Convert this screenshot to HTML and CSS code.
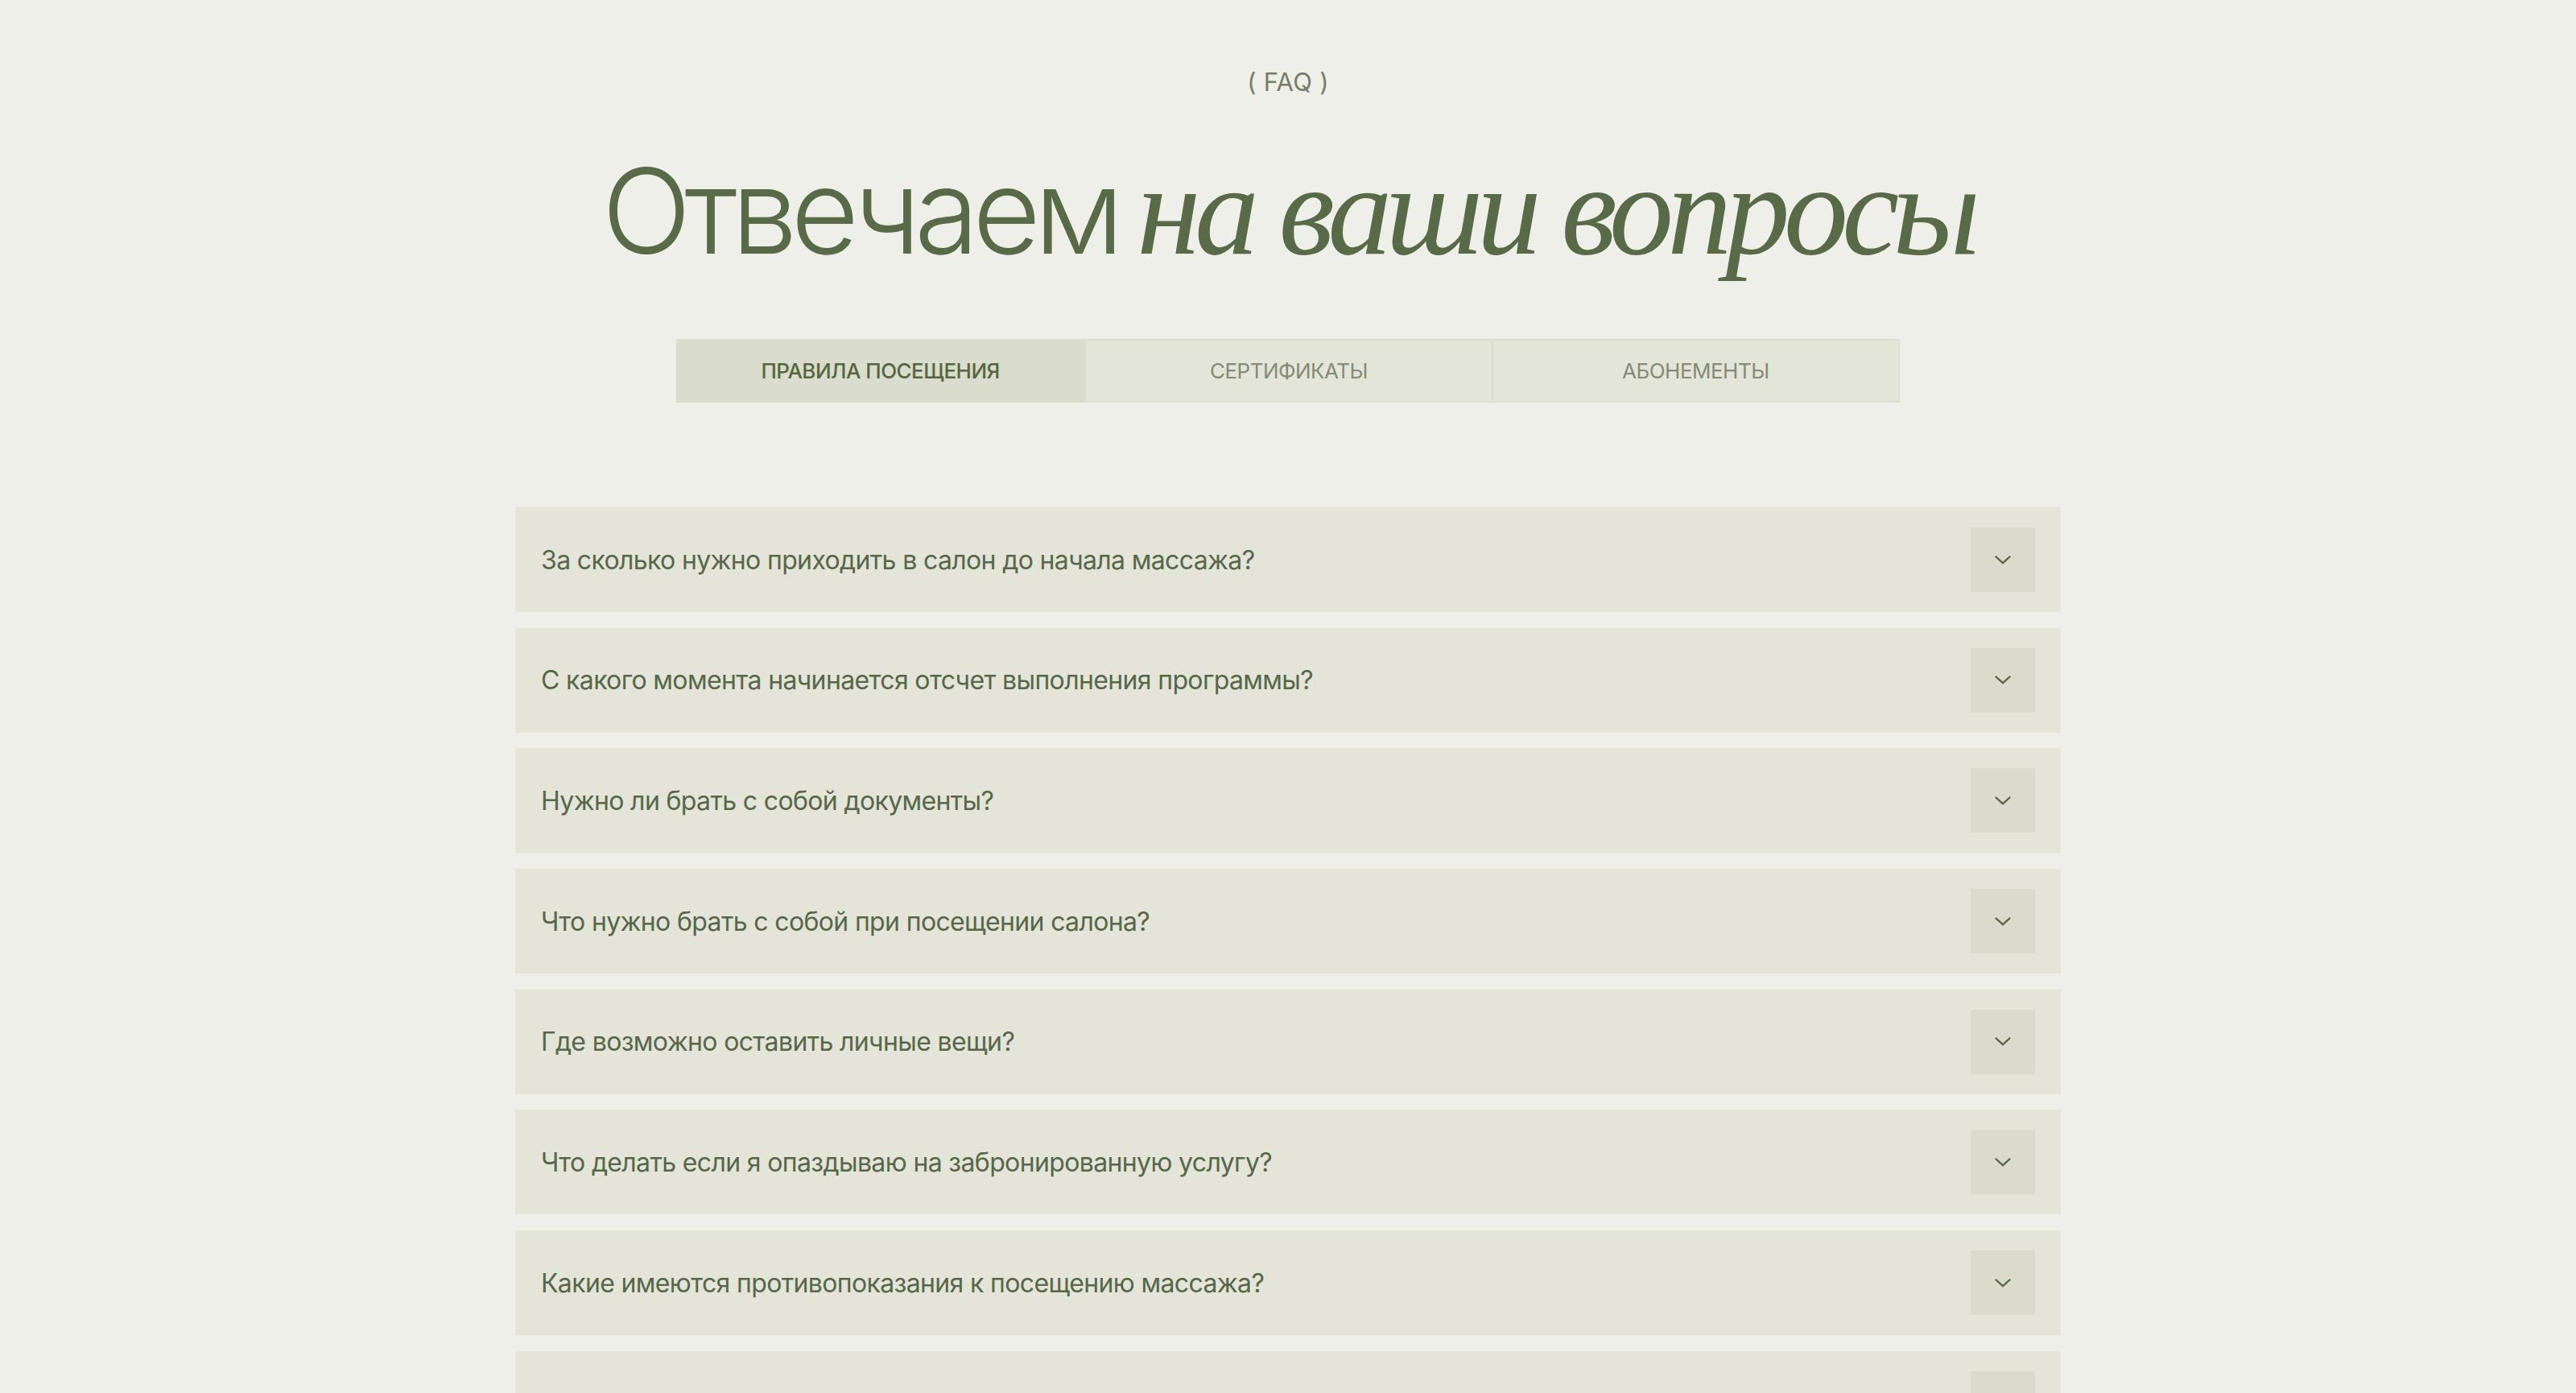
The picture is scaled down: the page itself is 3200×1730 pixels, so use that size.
FILE: index.html
```html
<!DOCTYPE html>
<html lang="ru">
<head>
<meta charset="utf-8">
<title>FAQ</title>
<link rel="stylesheet" href="styles.css">
</head>
<body>
<section class="faq">
  <div class="eyebrow">( FAQ )</div>
  <h1 class="title"><span class="title-sans">Отвечаем</span> <span class="title-serif">на ваши вопросы</span></h1>
  <div class="tabs">
    <button class="tab tab-active">ПРАВИЛА ПОСЕЩЕНИЯ</button>
    <button class="tab">СЕРТИФИКАТЫ</button>
    <button class="tab">АБОНЕМЕНТЫ</button>
  </div>
  <ul class="list">
    <li class="item"><span class="q">За сколько нужно приходить в салон до начала массажа?</span><span class="toggle"><svg viewBox="0 0 24 14" class="chev"><path d="M2 2 L12 11 L22 2"/></svg></span></li>
    <li class="item"><span class="q">С какого момента начинается отсчет выполнения программы?</span><span class="toggle"><svg viewBox="0 0 24 14" class="chev"><path d="M2 2 L12 11 L22 2"/></svg></span></li>
    <li class="item"><span class="q">Нужно ли брать с собой документы?</span><span class="toggle"><svg viewBox="0 0 24 14" class="chev"><path d="M2 2 L12 11 L22 2"/></svg></span></li>
    <li class="item"><span class="q">Что нужно брать с собой при посещении салона?</span><span class="toggle"><svg viewBox="0 0 24 14" class="chev"><path d="M2 2 L12 11 L22 2"/></svg></span></li>
    <li class="item"><span class="q">Где возможно оставить личные вещи?</span><span class="toggle"><svg viewBox="0 0 24 14" class="chev"><path d="M2 2 L12 11 L22 2"/></svg></span></li>
    <li class="item"><span class="q">Что делать если я опаздываю на забронированную услугу?</span><span class="toggle"><svg viewBox="0 0 24 14" class="chev"><path d="M2 2 L12 11 L22 2"/></svg></span></li>
    <li class="item"><span class="q">Какие имеются противопоказания к посещению массажа?</span><span class="toggle"><svg viewBox="0 0 24 14" class="chev"><path d="M2 2 L12 11 L22 2"/></svg></span></li>
    <li class="item"><span class="q">Как часто можно посещать массаж?</span><span class="toggle"><svg viewBox="0 0 24 14" class="chev"><path d="M2 2 L12 11 L22 2"/></svg></span></li>
  </ul>
</section>
</body>
</html>
```

FILE: styles.css
```css
* { box-sizing: border-box; }
html, body { margin: 0; padding: 0; }
body {
  background: #efefea;
  font-family: "Inter", "Noto Sans", sans-serif;
  color: #586a47;
  overflow: hidden;
}
.faq {
  display: flex;
  flex-direction: column;
  align-items: center;
  padding-top: 82px;
}
.eyebrow {
  font-size: 31px;
  line-height: 40px;
  color: #767e68;
  letter-spacing: 0.01em;
}
.title {
  margin: 49px 0 0;
  font-weight: 300;
  line-height: 180px;
  height: 180px;
  white-space: nowrap;
  color: #586a47;
  display: flex;
  align-items: baseline;
  gap: 24px;
}
.title-sans {
  font-family: "Inter", "Noto Sans", sans-serif;
  font-size: 146px;
  font-weight: 300;
  letter-spacing: -0.055em;
}
.title-serif {
  font-family: "Liberation Serif", "DejaVu Serif", serif;
  font-style: italic;
  font-weight: 400;
  font-size: 160px;
  letter-spacing: -0.048em;
}
.tabs {
  margin-top: 70px;
  display: grid;
  grid-template-columns: repeat(3, 1fr);
  width: 1520px;
  height: 79px;
  border: 2px solid #dcddcf;
  background: #e4e5d9;
}
.tab {
  font-family: "Inter", "Noto Sans", sans-serif;
  font-size: 26px;
  letter-spacing: -0.02em;
  border: 0;
  background: transparent;
  color: #848b76;
  padding: 0;
  margin: 0;
}
.tab + .tab { border-left: 2px solid #dcddcf; }
.tab-active {
  background: #dadccd;
  color: #56673f;
  font-weight: 500;
  margin: -2px 0 -2px -2px;
}
.list {
  list-style: none;
  margin: 130px 0 0;
  padding: 0;
  width: 1920px;
  display: flex;
  flex-direction: column;
  gap: 19.7px;
}
.item {
  height: 130px;
  background: #e4e4d8;
  display: flex;
  align-items: center;
  justify-content: space-between;
  padding: 0 32px 0 32px;
}
.q {
  font-size: 32px;
  letter-spacing: -0.02em;
  color: #56674a;
}
.toggle {
  width: 80px;
  height: 80px;
  background: #dadbcc;
  display: flex;
  align-items: center;
  justify-content: center;
}
.chev {
  width: 22px;
  height: 13px;
  fill: none;
  stroke: #56674a;
  stroke-width: 2.4;
}
```
